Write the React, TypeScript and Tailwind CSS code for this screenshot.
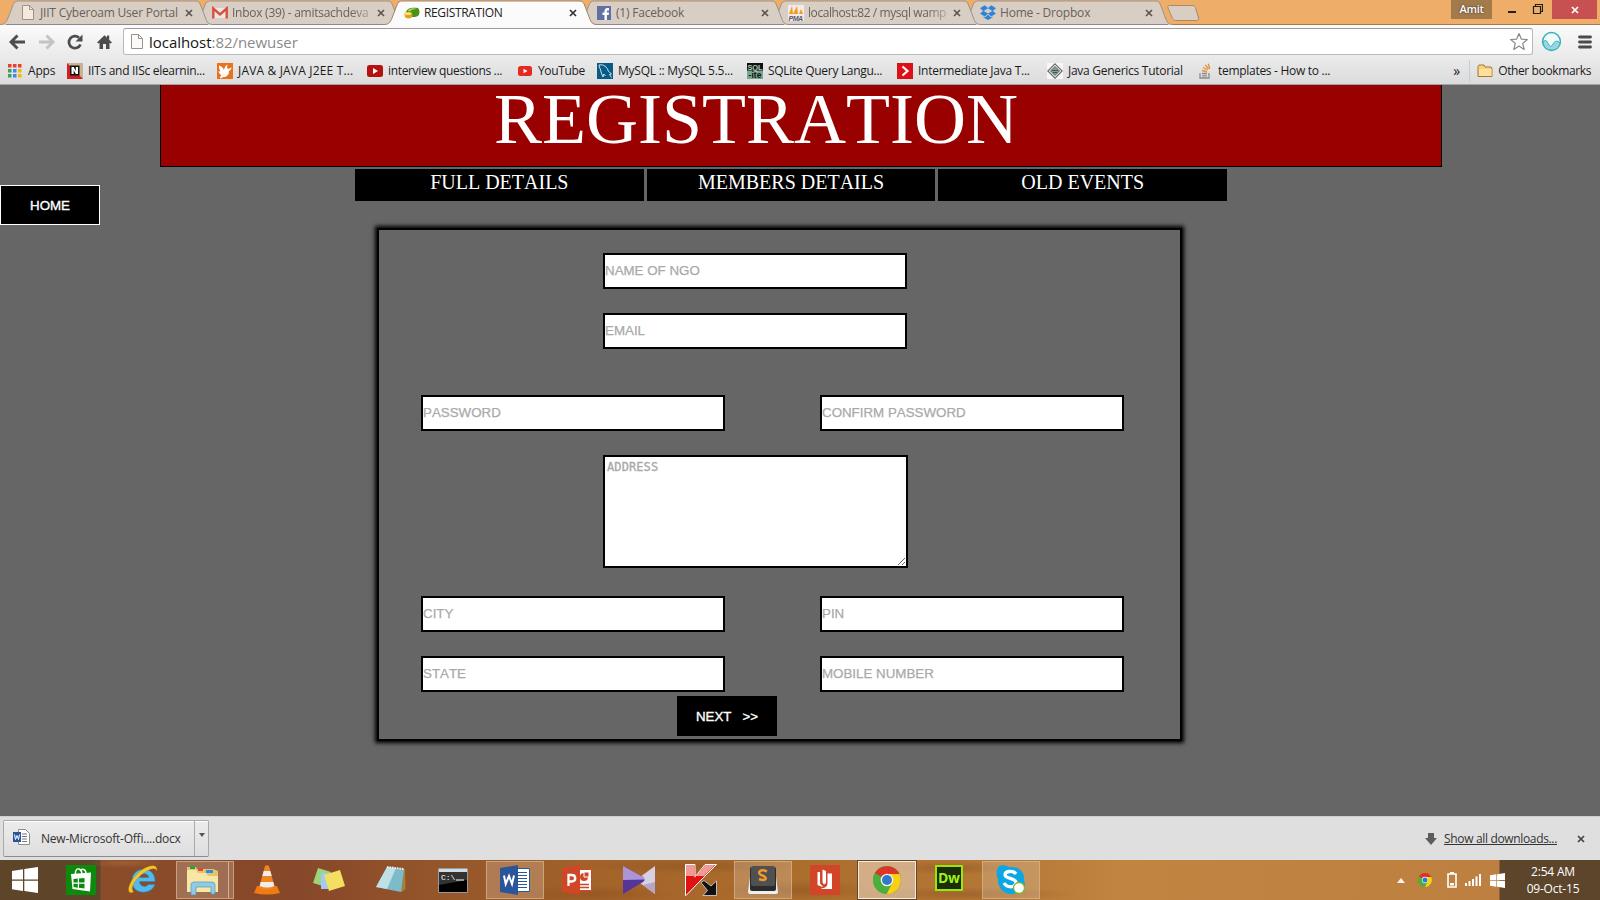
import type { ReactNode } from "react";

const UI = "font-['Open_Sans','Noto_Sans',sans-serif]";

/* ---------- small icons ---------- */
function PageIcon({ fill }: { fill: string }) {
  return (
    <svg width="12" height="15" viewBox="0 0 12 15">
      <path d="M.5.5h7l4 4v10H.5z" fill={fill} stroke="#9a938c" />
      <path d="M7.500.5v4h4" fill="none" stroke="#9a938c" />
    </svg>
  );
}

function GmailIcon() {
  return (
    <svg width="16" height="14" viewBox="0 0 16 14">
      <path d="M2 2h12v10H2z" fill="#eee7e1" />
      <path d="M1.300 12.500V2.500L8 8.500l6.700-6v10" fill="none" stroke="#d8503f" strokeWidth="2.400" />
    </svg>
  );
}

function LeafIcon() {
  return (
    <svg width="16" height="13" viewBox="0 0 16 13">
      <path d="M2 6C3 2 8 1 14 2c2 2 2 6 0 8-2 1-4 1-6 1z" fill="#4c8f1c" />
      <path d="M4 4c3-2 6-2 9-1-3 0-6 1-8 3z" fill="#a6d94f" />
      <path d="M0 7c3-1 6-1 8 0 1 3 0 4-1 5-3 1-5 0-6-1z" fill="#e0a31d" />
      <path d="M0 7c3-1 6-1 8 0l-2 2-5 0z" fill="#ffdf6a" />
    </svg>
  );
}

function FacebookIcon() {
  return (
    <svg width="14" height="14" viewBox="0 0 14 14">
      <path d="M0 0h14v14H0z" fill="#61709f" />
      <path d="M7.500 14V9H5.500V6.500h2V5c0-2 1.200-3 3-3H12v2.400h-1.200c-.7 0-.9.300-.9.900v1.200H12L11.700 9H9.900v5z" fill="#fff" />
    </svg>
  );
}

function PmaIcon() {
  return (
    <svg width="16" height="16" viewBox="0 0 16 16">
      <path d="M0 0h16v16H0z" fill="#f1ece8" />
      <path d="M1 9 4 1l1 8zM5 9l4-8 1 8zM11 9l2-5 2 5z" fill="#f39a1f" />
      <text x="0.500" y="15.500" fontSize="7" fontWeight="bold" fontStyle="italic" fontFamily="Liberation Sans, sans-serif" fill="#57566f" textLength="14.500">PMA</text>
    </svg>
  );
}

function DropboxIcon() {
  return (
    <svg width="16" height="15" viewBox="0 0 16 15">
      <path d="M4.700.3 8 3l3.300-2.700L16 3.300l-3.200 2.600L16 8.500l-4.700 3L8 8.800l-3.300 2.700L0 8.500l3.200-2.600L0 3.300zM8 3.300 3.700 5.900 8 8.500l4.300-2.600z" fill="#2f83d6" fillRule="evenodd" />
      <path d="m3.500 11.600 1.300.8L8 9.700l3.200 2.700 1.300-.8v1L8 15l-4.500-2.400z" fill="#2f83d6" />
    </svg>
  );
}

function AppsIcon() {
  const colors = ["#ea3f30", "#ea3f30", "#ea3f30", "#35a552", "#4285f4", "#f9b50b", "#35a552", "#4285f4", "#f9b50b"];
  return (
    <svg width="14" height="14" viewBox="0 0 14 14">
      {colors.map((c, i) => (
        <rect key={i} x={(i % 3) * 5} y={Math.floor(i / 3) * 5} width="3.500" height="3.500" fill={c} />
      ))}
    </svg>
  );
}

function IitIcon() {
  return (
    <svg width="16" height="16" viewBox="0 0 16 16">
      <path d="M0 0h16v16H0z" fill="#c9b491" />
      <path d="M0 0v16h16z" fill="#d11f27" />
      <path d="M3 2.500h9.500v10H3z" fill="#111" />
      <path d="M4.500 11V4h2.200l2.100 4V4H11v7H8.800L6.700 7.200V11z" fill="#fff" />
    </svg>
  );
}

function BirdIcon() {
  return (
    <svg width="16" height="16" viewBox="0 0 16 16">
      <path d="M0 0h16v16H0z" fill="#e8731c" />
      <path d="M2 2.500c2 .5 4 2 5 4.500C7.500 4.500 8.500 2.500 10.500 1.500c-.5 2-.3 3 0 4.500L15 4.500c-1 1.500-1.500 3-3 3.500 0 4-2.500 6-5.500 6L3 15.500c0-1.500.5-2.500 1.500-3.500C2.500 11 1.500 9.500 1.500 8 2 8.300 3 8.500 3.500 8.300 2.300 6.500 1.800 4.500 2 2.500z" fill="#fff" />
    </svg>
  );
}

function TubeIcon({ dark = false }: { dark?: boolean }) {
  return dark ? (
    <svg width="16" height="12" viewBox="0 0 16 12">
      <rect width="16" height="12" rx="2.500" fill="#b3120f" />
      <path d="M6 3v6l5-3z" fill="#fff" />
    </svg>
  ) : (
    <svg width="14" height="10" viewBox="0 0 14 10">
      <rect width="14" height="10" rx="2.500" fill="#e62a20" />
      <path d="M5.500 2.700v4.600l4-2.300z" fill="#fff" />
    </svg>
  );
}

function MysqlIcon() {
  return (
    <svg width="16" height="16" viewBox="0 0 16 16">
      <path d="M0 0h16v16H0z" fill="#085b86" />
      <path d="M2 2c5-1 8 2 9.500 6.500 1 1 2.500 1.500 3 2.500l-2 .5 2 3M2 2c0 3 2 4 2 7l2 5 .7-3 2 2" fill="none" stroke="#d4e4ec" strokeWidth="1" />
    </svg>
  );
}

function SqliteIcon() {
  return (
    <svg width="16" height="16" viewBox="0 0 16 16">
      <path d="M0 0h16v16H0z" fill="#79a690" />
      <path d="M0 0h16v7.500H0z" fill="#111" />
      <text x="0.500" y="6.700" fontSize="7.500" fontWeight="bold" fontFamily="Liberation Sans, sans-serif" fill="#a9cdb9" textLength="15">SQL</text>
      <text x="1.500" y="15" fontSize="8.500" fontWeight="bold" fontFamily="Liberation Sans, sans-serif" fill="#111" textLength="13">-ite</text>
    </svg>
  );
}

function RedArrowIcon() {
  return (
    <svg width="16" height="16" viewBox="0 0 16 16">
      <path d="M0 0h16v16H0z" fill="#dc1018" />
      <path d="m5.500 3.500 5 4.500-5 4.500" fill="none" stroke="#fff" strokeWidth="2.200" />
    </svg>
  );
}

function DiamondIcon() {
  return (
    <svg width="16" height="16" viewBox="0 0 16 16">
      <path d="M0 0h16v16H0z" fill="#f7f7f7" />
      <path d="m8 .8 7.200 7.200L8 15.200.8 8z" fill="#f1f4f2" stroke="#666" strokeWidth="1.100" />
      <path d="m8 3.500 4.500 4.500L8 12.500 3.500 8z" fill="#80a590" stroke="#444" strokeWidth=".8" />
      <path d="M5 7.500h6M6 9.500h4" stroke="#345" strokeWidth=".8" />
    </svg>
  );
}

function StackIcon() {
  return (
    <svg width="13" height="16" viewBox="0 0 13 16">
      <path d="M1 10v5h9v-5M3 12.800h5M3 10.500h5" fill="none" stroke="#8b8b8b" strokeWidth="1.300" />
      <path d="m3 7.500 5 1.300M4 4.500l4.500 2.700M6.300 2l3.200 4M9.300.7l1.500 5" stroke="#ee8d2d" strokeWidth="1.300" />
    </svg>
  );
}

function FolderIcon() {
  return (
    <svg width="16" height="14" viewBox="0 0 16 14">
      <path d="M1 12.500V2.500l1-1.500h5l1 2h6l1 1v8.500z" fill="#f8d17c" stroke="#a5773b" />
      <path d="M2 5h12.500v7H2z" fill="#ffe09a" />
    </svg>
  );
}

function CloseX({ color = "#5d5650" }: { color?: string }) {
  return (
    <svg width="8" height="8" viewBox="0 0 8 8">
      <path d="m1 1 6 6M7 1 1 7" stroke={color} strokeWidth="1.700" />
    </svg>
  );
}

/* ---------- tab strip ---------- */
type TabData = { title: string; icon: ReactNode; active?: boolean; fade?: boolean; z: string; track: string };

const tabs: TabData[] = [
  { title: "JIIT Cyberoam User Portal", icon: <PageIcon fill="#f6e9dc" />, z: "z-[6]", track: "tracking-[-0.2px]" },
  { title: "Inbox (39) - amitsachdeva", icon: <GmailIcon />, fade: true, z: "z-[5]", track: "tracking-[-0.26px]" },
  { title: "REGISTRATION", icon: <LeafIcon />, active: true, z: "z-[7]", track: "tracking-[-0.35px]" },
  { title: "(1) Facebook", icon: <FacebookIcon />, z: "z-[3]", track: "tracking-[-0.2px]" },
  { title: "localhost:82 / mysql wamp", icon: <PmaIcon />, fade: true, z: "z-[2]", track: "tracking-[-0.42px]" },
  { title: "Home - Dropbox", icon: <DropboxIcon />, z: "z-[1]", track: "tracking-[-0.2px]" },
];

function Tab({ tab }: { tab: TabData }) {
  return (
    <div className={`relative -mr-[22px] h-[25px] w-[214px] shrink-0 ${tab.z}`}>
      <svg className="absolute inset-0" width="214" height="25" viewBox="0 0 214 25">
        <path
          d="M0 25V24.500C5 24.500 6.500 22 8 18L13 5C14.300 2 15 1 18.500 1H195C198.500 1 199.500 2 200.500 5L205.500 18C207 22.500 208.500 24.500 213 24.500V25Z"
          fill={tab.active ? "#fbfbfb" : "#d8cec4"}
        />
        <path
          d="M0 24.500C5 24.500 6.500 22 8 18L13 5C14.300 2 15 1 18.500 1H195C198.500 1 199.500 2 200.500 5L205.500 18C207 22.500 208.500 24.500 213 24.500"
          fill="none"
          stroke={tab.active ? "#9c8468" : "#9f9389"}
          strokeWidth="1"
        />
        {!tab.active && <path d="M6 24.500h202" stroke="#8e8791" />}
      </svg>
      <div className="relative flex h-[25px] items-center pl-5">
        <span className="flex w-4 shrink-0 justify-center">{tab.icon}</span>
        <span
          className={`ml-1 min-w-0 flex-1 whitespace-nowrap text-[12px] leading-[25px] ${tab.track} ${tab.active ? "text-[#222]" : "text-[#6a615a]"} ${tab.fade ? "[mask-image:linear-gradient(to_right,black_84%,rgba(0,0,0,.25)_100%)]" : ""}`}
        >
          {tab.title}
        </span>
        <span className="ml-1 mr-[21px]">
          <CloseX color={tab.active ? "#333" : "#5d5650"} />
        </span>
      </div>
    </div>
  );
}

function TabStrip() {
  return (
    <div className="flex h-[25px] bg-[#eeae6a] shadow-[inset_0_-1px_0_#a8794a]">
      <div className="flex">
        {tabs.map((t) => (
          <Tab key={t.title} tab={t} />
        ))}
      </div>
      <svg className="ml-[15px] mt-[5px]" width="34" height="16" viewBox="0 0 34 16">
        <path d="M2.500.5H25c2 0 3 1 3.500 2l3 10.500c.5 1.500 0 2.500-2 2.500H9c-2 0-3-1-3.500-2L1 3C.5 1.500 1 .5 2.500.5z" fill="#d8cec4" stroke="#ad8a64" />
      </svg>
      <div className="flex-1" />
      <div className="flex">
        <div className="mr-4 h-[19px] w-[41px] bg-[#a37b4a] text-center text-[11px] font-semibold leading-[18px] tracking-[-0.3px] text-white [text-shadow:0_0_2px_#222]">Amit</div>
        <svg className="mr-[9px]" width="35" height="19" viewBox="0 0 35 19">
          <path d="M0 11h8v2H0z" fill="#1e1e1e" />
          <path d="M25.500 6.500h7v7h-7zM27.500 6.500v-2h7v7h-2" fill="none" stroke="#1e1e1e" strokeWidth="1.200" />
        </svg>
        <div className="mr-[3px] flex h-[19px] w-[45px] items-center justify-center bg-[#c75050]">
          <CloseX color="#fff" />
        </div>
      </div>
    </div>
  );
}

/* ---------- toolbar ---------- */
function Toolbar() {
  return (
    <div className="flex h-[33px] items-center">
      <svg className="ml-[9px]" width="104" height="20" viewBox="0 0 104 20">
        <path d="M2 10h14M8.500 3.500 2 10l6.500 6.500" fill="none" stroke="#4d4d4d" strokeWidth="2.900" />
        <path d="M30 10h14M37.500 3.500 44 10l-6.500 6.500" fill="none" stroke="#c3c3c3" strokeWidth="2.900" />
        <path d="M71.500 12.500A6 6 0 1 1 70 5.700" fill="none" stroke="#4d4d4d" strokeWidth="2.700" />
        <path d="M73.500 2.500v7h-7z" fill="#4d4d4d" />
        <path d="m88 10.500 7.500-7.300 2.500 2.300V3.500h2.200v4.300l2.800 2.700-1.500 1-1-.7V17h-3.500v-5h-3v5h-3.500v-6.200l-1 .7z" fill="#4d4d4d" />
      </svg>
      <div className="ml-[10px] flex h-[27px] w-[1410px] items-center rounded-[3px] border border-[#b9b9b9] border-t-[#9c9c9c] bg-white">
        <span className="ml-[7px]">
          <PageIcon fill="#fafafa" />
        </span>
        <span className="ml-[6px] flex-1 text-[15px] leading-6 tracking-[-0.04px] text-[#8a8a8a]">
          <span className="text-[#151515]">localhost</span>:82/newuser
        </span>
        <svg className="mr-[3px]" width="20" height="19" viewBox="0 0 20 19">
          <path d="m10 1.500 2.300 5.600 6 .4-4.600 3.900 1.500 6L10 14l-5.200 3.400 1.500-6L1.700 7.500l6-.4z" fill="#fff" stroke="#888" strokeWidth="1.200" strokeLinejoin="round" />
        </svg>
      </div>
      <svg className="ml-[8px]" width="21" height="21" viewBox="0 0 21 21">
        <circle cx="10.500" cy="10.500" r="8.900" fill="#f2fafa" stroke="#38b1bd" strokeWidth="1.500" />
        <path d="M2 11c3-3 4-1 6 3 1 2 2 2 4-1 2-3 4-4 7-1-1 5-4 7-8.500 7S3 17 2 11z" fill="#9ad6df" stroke="#38b1bd" />
      </svg>
      <svg className="ml-[16px]" width="14" height="14" viewBox="0 0 14 14">
        <path d="M1.500 2h11M1.500 7h11M1.500 12h11" stroke="#4b4b4b" strokeWidth="2.800" strokeLinecap="round" />
      </svg>
    </div>
  );
}

const bookmarks: { label: string; icon: ReactNode; w: string; track: string }[] = [
  { label: "Apps", icon: <AppsIcon />, w: "w-[60px]", track: "tracking-[-0.2px]" },
  { label: "IITs and IISc elearnin...", icon: <IitIcon />, w: "w-[150px]", track: "tracking-[-0.29px]" },
  { label: "JAVA & JAVA J2EE T...", icon: <BirdIcon />, w: "w-[150px]", track: "tracking-[0.17px]" },
  { label: "interview questions ...", icon: <TubeIcon dark />, w: "w-[150px]", track: "tracking-[-0.34px]" },
  { label: "YouTube", icon: <TubeIcon />, w: "w-[80px]", track: "tracking-[-0.35px]" },
  { label: "MySQL :: MySQL 5.5...", icon: <MysqlIcon />, w: "w-[150px]", track: "tracking-[-0.24px]" },
  { label: "SQLite Query Langu...", icon: <SqliteIcon />, w: "w-[150px]", track: "tracking-[-0.3px]" },
  { label: "Intermediate Java T...", icon: <RedArrowIcon />, w: "w-[150px]", track: "tracking-[-0.26px]" },
  { label: "Java Generics Tutorial", icon: <DiamondIcon />, w: "w-[150px]", track: "tracking-[-0.28px]" },
  { label: "templates - How to ...", icon: <StackIcon />, w: "w-[150px]", track: "tracking-[-0.29px]" },
];

function BookmarksBar() {
  return (
    <div className="flex h-[26px] items-center pl-[7px] text-[12px] leading-[22px] text-[#1b1b1b]">
      {bookmarks.map((b) => (
        <div key={b.label} className={`flex shrink-0 items-center whitespace-nowrap ${b.w}`}>
          <span className="flex w-4 shrink-0 justify-center">{b.icon}</span>
          <span className={`mb-px ml-[5px] ${b.track}`}>{b.label}</span>
        </div>
      ))}
      <div className="flex-1" />
      <span className="mb-px mr-[9px] text-[14px]">»</span>
      <span className="h-[22px] w-px bg-[#c6cdd6]" />
      <span className="ml-[7px]">
        <FolderIcon />
      </span>
      <span className="mb-px ml-[5px] mr-[9px] whitespace-nowrap tracking-[-0.38px]">Other bookmarks</span>
    </div>
  );
}

/* ---------- page ---------- */
function Field({ label, className = "" }: { label: string; className?: string }) {
  return (
    <input
      placeholder={label}
      className={`block h-9 w-[304px] shrink-0 border-2 border-black bg-white pb-px text-[13.33px] [font-kerning:none] placeholder:text-[#a9a9a9] placeholder:opacity-100 placeholder:[-webkit-text-stroke:0.25px_#a9a9a9] ${className}`}
    />
  );
}

function FieldPair({ left, right, className }: { left: string; right: string; className: string }) {
  return (
    <div className={`ml-[42px] flex gap-[95px] ${className}`}>
      <Field label={left} />
      <Field label={right} />
    </div>
  );
}

function RegistrationPage() {
  return (
    <main className="h-[731px] overflow-hidden bg-[#666] font-['Liberation_Sans',Arial,sans-serif]">
      <header className="ml-[160px] h-[82px] w-[1282px] border border-t-0 border-black bg-[#900] pl-[333px]">
        <h1 className="font-['Liberation_Serif','Times_New_Roman',serif] text-[72px] leading-[69px] text-white [font-kerning:none]">REGISTRATION</h1>
      </header>
      <div className="flex h-[56px]">
        <button className="mt-[18px] h-10 w-[100px] shrink-0 border border-white bg-black pt-px text-[13.33px] text-white [-webkit-text-stroke:0.35px_#fff] [font-kerning:none]">HOME</button>
        <nav className="ml-[255px] mt-[2px] flex h-8 gap-[3px] font-['Liberation_Serif','Times_New_Roman',serif] text-[20px] leading-[27px] text-white [font-kerning:none]">
          {["FULL DETAILS", "MEMBERS DETAILS", "OLD EVENTS"].map((t) => (
            <a key={t} className="w-[288.7px] bg-black text-center">
              {t}
            </a>
          ))}
        </nav>
      </div>
      <form className="ml-[377px] mt-[5px] h-[513px] w-[805px] border-2 border-black pt-[23px] shadow-[0_0_4px_2px_#000]">
        <Field label="NAME OF NGO" className="ml-[224px]" />
        <Field label="EMAIL" className="ml-[224px] mt-6" />
        <FieldPair left="PASSWORD" right="CONFIRM PASSWORD" className="mt-[46px]" />
        <textarea
          placeholder="ADDRESS"
          className="ml-[224px] mt-6 block h-[113px] w-[305px] resize border-2 border-black bg-white p-[2px] font-['DejaVu_Sans_Mono',monospace] text-[12px] leading-[17px] tracking-[0.1px] placeholder:text-[#a9a9a9] placeholder:opacity-100 placeholder:[-webkit-text-stroke:0.3px_#a9a9a9]"
        />
        <FieldPair left="CITY" right="PIN" className="mt-7" />
        <FieldPair left="STATE" right="MOBILE NUMBER" className="mt-6" />
        <button
          type="button"
          className="ml-[298px] mt-1 block h-10 w-[100px] whitespace-pre bg-black pt-px text-[13.33px] text-white [-webkit-text-stroke:0.35px_#fff] [font-kerning:none]"
        >
          {"NEXT   >>"}
        </button>
      </form>
    </main>
  );
}

/* ---------- download shelf ---------- */
function DownloadShelf() {
  return (
    <div className="flex h-[44px] items-center border-t border-[#cfcfcf] bg-[#dfdfdf] text-[12px] text-[#333]">
      <div className="ml-[3px] flex h-[37px] w-[206px] items-center rounded-[2px] border border-[#a9a9a9] border-b-[#8c8c8c] bg-gradient-to-b from-[#ececec] to-[#dedede] shadow-[inset_0_1px_0_#fff]">
        <svg className="ml-[9px] mb-[3px]" width="17" height="17" viewBox="0 0 17 17">
          <path d="M5.500.5h7l4 4v11h-11z" fill="#fff" stroke="#8d8d8d" />
          <path d="M9 5h5M9 7.500h5M9 10h5M9 12.500h5" stroke="#777" />
          <path d="M0 3h8v10H0z" fill="#2a5699" />
          <path d="m1.500 5.500 1 5 1.500-4 1.500 4 1-5" fill="none" stroke="#fff" />
        </svg>
        <span className="ml-[11px] flex-1 whitespace-nowrap tracking-[-0.22px]">New-Microsoft-Offi....docx</span>
        <span className="flex h-full w-[14px] items-start justify-center border-l border-[#a9a9a9] pt-[12px]">
          <svg width="6" height="4" viewBox="0 0 6 4">
            <path d="M0 0h6L3 4z" fill="#555" />
          </svg>
        </span>
      </div>
      <div className="flex-1" />
      <svg width="12" height="12" viewBox="0 0 12 12">
        <path d="M3 0h6v5h3l-6 7-6-7h3z" fill="#5d5d5d" />
      </svg>
      <span className="ml-[7px] whitespace-nowrap tracking-[-0.34px] underline">Show all downloads...</span>
      <span className="ml-[20px] mr-[15px]">
        <CloseX color="#444" />
      </span>
    </div>
  );
}

/* ---------- taskbar ---------- */
function WindowsLogo({ size }: { size: number }) {
  return (
    <svg width={size} height={size} viewBox="0 0 26 26">
      <path d="M0 4 11 2.300V12.500H0zM12.300 2 26 0v12.500H12.300zM0 13.700h11V24L0 22.300zM12.300 13.700H26V26l-13.700-2z" fill="#fff" />
    </svg>
  );
}

function ChromeIcon({ size }: { size: number }) {
  return (
    <svg width={size} height={size} viewBox="0 0 28 28">
      <circle cx="14" cy="14" r="14" fill="#4caf3c" />
      <path d="M14 14 1.900 7A14 14 0 0 1 26.500 8H14z" fill="#dc3528" />
      <path d="M14 8h12.500A14 14 0 0 1 13.500 28L19.200 17z" fill="#fbcf12" />
      <path d="M1.900 7A14 14 0 0 0 13.500 28L19 17 9 17z" fill="#4caf3c" />
      <circle cx="14" cy="14" r="6.300" fill="#f4f4f4" />
      <circle cx="14" cy="14" r="5" fill="#3279c8" />
    </svg>
  );
}

const apps: { name: string; frame?: "open" | "focus" | "stack"; icon: ReactNode }[] = [
  {
    name: "store",
    icon: (
      <svg width="30" height="30" viewBox="0 0 30 30">
        <path d="M0 0h30v30H0z" fill="#0c8a0c" />
        <path d="m5 9 20-1.500-1 19L6.500 24z" fill="#fff" />
        <path d="M9.500 10C9 5 11 3.500 13 4s3 3 3 6M14 6c2-3 6-2 6 3" fill="none" stroke="#fff" strokeWidth="1.400" />
        <path d="m7.500 14 4.300-.4v4H7.500zM13 13.400l5.500-.5v4.700H13zM7.500 18.700h4.300v4l-4.300-.6zM13 18.700h5.500v4.800l-5.500-.7z" fill="#0c8a0c" />
      </svg>
    ),
  },
  {
    name: "ie",
    icon: (
      <svg width="32" height="32" viewBox="0 0 32 32">
        <path d="M28 17.500H12.500c.3 5 6 6.500 9 3h6.500C24 31.500 5 31 5 17 5 1 29 1.500 28 17.500zm-15.400-4h9.200c-.5-5-8.500-5-9.200 0z" fill="#52b9ec" stroke="#2384bd" strokeWidth=".6" fillRule="evenodd" />
        <path d="M6.500 28C-1 32 0 20 10 10 20 0 32-1 29.500 7c0-4-7-3-15 3.500C7 17 3 24 6.500 28z" fill="#f7c62d" stroke="#bb8417" strokeWidth=".4" />
      </svg>
    ),
  },
  {
    name: "explorer",
    frame: "stack",
    icon: (
      <svg width="34" height="30" viewBox="0 0 34 30">
        <path d="M1 2h9l1 2h16l5 2v21H1z" fill="#e4c56c" />
        <path d="M4 1h5v3H4z" fill="#28a348" />
        <path d="M12 3h5v3h-5z" fill="#d94f33" />
        <path d="M20 5h7v3h-7z" fill="#2f8be0" />
        <path d="M1 5h9l2 3h8l2 3h10v16H1z" fill="#f8e7a4" />
        <path d="M5 30V20q0-3 3-3h18q3 0 3 3v9h-4v-7H10v8z" fill="#8fcbe9" stroke="#4f98c0" strokeWidth=".7" />
      </svg>
    ),
  },
  {
    name: "vlc",
    icon: (
      <svg width="28" height="30" viewBox="0 0 28 30">
        <path d="M4 21h20l3 7q-13 3-26 0z" fill="#ef7b12" />
        <path d="M12 1q2-1.500 4 0l6 22q-8 4-16 0z" fill="#f18420" />
        <path d="m10.700 6 6.600 0 1.400 5h-9.400zM7.700 17h12.600l1 4q-7 3-14.600 0z" fill="#f0eeea" />
      </svg>
    ),
  },
  {
    name: "notes",
    icon: (
      <svg width="34" height="28" viewBox="0 0 34 28">
        <path d="m6 2 13 4-5 15L1 17z" fill="#9ed47b" />
        <path d="M9 7h14v16H9z" fill="#a2c9f1" />
        <path d="m12 9 16-5 5 16-16 5z" fill="#f5df62" />
      </svg>
    ),
  },
  {
    name: "notepad",
    icon: (
      <svg width="32" height="30" viewBox="0 0 32 30">
        <path d="m12 3 18 1 .5 20-4 3z" fill="#9b8346" />
        <path d="m12 2 17 2-3 23L1 22z" fill="#7dbbc9" />
        <path d="m12 2 9 1-9 21-11-2z" fill="#bfe0e4" />
        <path d="m12 2 17 2" stroke="#eee" strokeWidth="2" strokeDasharray="1.500 1" />
      </svg>
    ),
  },
  {
    name: "cmd",
    icon: (
      <svg width="30" height="25" viewBox="0 0 30 25">
        <path d="M.5.5h29v24H.5z" fill="#000" stroke="#9a9a9a" />
        <path d="M1 1h28v3H1z" fill="#d5dbe2" />
        <path d="M1 4h28v8L1 17z" fill="#333" />
        <text x="3" y="12" fontSize="8" fontFamily="Liberation Mono, monospace" fill="#fff">C:\</text>
        <path d="M18 12h8" stroke="#fff" />
      </svg>
    ),
  },
  {
    name: "word",
    frame: "open",
    icon: (
      <svg width="30" height="30" viewBox="0 0 30 30">
        <path d="M16 3.500h13.500v23H16z" fill="#fff" stroke="#2a5699" />
        <path d="M18 7.500h9M18 10.500h9M18 13.500h9M18 16.500h9M18 19.500h9M18 22.500h9" stroke="#2a5699" />
        <path d="m0 3 18-3v30L0 27z" fill="#2a5699" />
        <path d="m4 10.500 1.700 8.500L9 11l3 8 2-8.500" fill="none" stroke="#fff" strokeWidth="2" />
      </svg>
    ),
  },
  {
    name: "powerpoint",
    icon: (
      <svg width="30" height="30" viewBox="0 0 30 30">
        <path d="M16 4.500h13.500v21H16z" fill="#fff" stroke="#d04727" />
        <circle cx="22" cy="12" r="4" fill="#d04727" />
        <path d="M22 12V7h5v5z" fill="#d04727" stroke="#fff" />
        <path d="M18 19.500h9M18 22.500h9" stroke="#d04727" strokeWidth="1.500" />
        <path d="m0 3 18-3v30L0 27z" fill="#d04727" />
        <path d="M6.500 21V10h3c5 0 5 6.500 0 6.500h-3" fill="none" stroke="#fff" strokeWidth="2.300" />
      </svg>
    ),
  },
  {
    name: "player",
    icon: (
      <svg width="32" height="28" viewBox="0 0 32 28">
        <path d="M32 0v28L13 14z" fill="#d8d0e2" />
        <path d="M32 28V16l-12 3z" fill="#b4a7c6" />
        <path d="M0 0 20 11q3 3 0 5L0 28z" fill="#55359a" />
        <path d="M0 0 20 11q2 1 2 2.500L0 14z" fill="#ab95d6" />
      </svg>
    ),
  },
  {
    name: "antivirus",
    icon: (
      <svg width="32" height="32" viewBox="0 0 32 32">
        <path d="M.5.5H10V13L20 .5h11.500L16 16 1 31.500H.5z" fill="#e11212" stroke="#fff" />
        <path d="M1 1h8.500v13L20 1h10L19 12H1z" fill="#f19a95" />
        <path d="m16 18.500 3-2 7 5.500 5.500-5v14.500H18l4.500-5z" fill="#111" stroke="#ddd" strokeWidth=".8" />
      </svg>
    ),
  },
  {
    name: "sublime",
    frame: "open",
    icon: (
      <svg width="30" height="29" viewBox="0 0 30 29">
        <path d="M3 3h24l3 23q0 2-2 2H2q-2 0-2-2z" fill="#eee" />
        <rect x="2" y="1" width="26" height="24" rx="2" fill="#2b2b2b" />
        <rect x="3" y="0" width="24" height="20" rx="2" fill="#505050" />
        <path d="M19 5.500c-7-3-10 1-6 3.500 7 2 6 7-2 4" fill="none" stroke="#f5972c" strokeWidth="2.500" />
      </svg>
    ),
  },
  {
    name: "reader",
    icon: (
      <svg width="30" height="30" viewBox="0 0 30 30">
        <path d="M0 0h30v30H0z" fill="#d14628" />
        <path d="M7.500 7h2.500v11.500l2.500 2.500v1L7.500 20z" fill="#fff" />
        <path d="m12.500 4.500 3.500 1.500v12l-2 1.500-1.500-2z" fill="#fff" />
        <path d="M17.500 8.500H22V24H11.500v-.8c3-.2 5.500-1.200 6-4.200z" fill="#fff" />
      </svg>
    ),
  },
  { name: "chrome", frame: "focus", icon: <ChromeIcon size={28} /> },
  {
    name: "dreamweaver",
    icon: (
      <svg className="mb-1" width="28" height="26" viewBox="0 0 28 26">
        <path d="M1 1h26v24H1z" fill="#1d2c09" stroke="#92e90b" strokeWidth="2" />
        <text x="3" y="18" fontSize="14" fontWeight="bold" fontFamily="Open Sans, sans-serif" fill="#9cf31a" textLength="22">Dw</text>
      </svg>
    ),
  },
  {
    name: "skype",
    frame: "open",
    icon: (
      <svg width="30" height="30" viewBox="0 0 30 30">
        <path d="M3 1q6-2 10 1c10-1 16 5 15 14 3 6-1 13-7 12-10 4-20-4-19-14-2-4-2-9 1-13z" fill="#0ba6e6" />
        <path d="M20 9c-3-4-11-3-11 1s12 3 11 8-9 5-12 0" fill="none" stroke="#fff" strokeWidth="3.300" />
        <circle cx="23" cy="23" r="5.500" fill="#fff" stroke="#7ab52a" strokeWidth="1.300" />
      </svg>
    ),
  },
];

function frameClass(frame?: "open" | "focus" | "stack") {
  if (frame === "focus") return "border border-[#f3ebe2] bg-[#ead5c0]/60 outline outline-1 outline-[#694522]";
  if (frame === "open" || frame === "stack") return "border border-[#d8b58f]/70 bg-white/20";
  return "";
}

function Taskbar() {
  return (
    <footer className="flex h-10 items-center bg-[radial-gradient(90px_9px_at_590px_34px,#8c501f90,transparent),radial-gradient(110px_8px_at_690px_6px,#85501f80,transparent),radial-gradient(80px_10px_at_800px_30px,#8b501f80,transparent),radial-gradient(120px_7px_at_960px_34px,#8b552680,transparent),radial-gradient(60px_7px_at_950px_8px,#8b552690,transparent),radial-gradient(40px_5px_at_125px_3px,#b0713c80,transparent),linear-gradient(90deg,#5e4529_0,#5e4529_100px,#8a4d29_101px,#87472a_300px,#94552a_430px,#a4632a_600px,#ab6d2c_780px,#b57735_1000px,#c18441_1120px,#be8040_1499px,#5c452b_1500px)]">
      <div className="flex w-[50px] justify-center">
        <WindowsLogo size={26} />
      </div>
      {apps.map((a) => (
        <div key={a.name} className="flex h-10 w-[62px] shrink-0 items-center justify-center">
          <div className={`flex h-[38px] w-[58px] items-center justify-center ${frameClass(a.frame)}`}>
            <div className="flex flex-1 justify-center">{a.icon}</div>
            {a.frame === "stack" && <div className="h-full w-[5px] border-l border-[#d8b58f]/90" />}
          </div>
        </div>
      ))}
      <div className="flex-1" />
      <svg width="8" height="5" viewBox="0 0 8 5">
        <path d="M0 5h8L4 0z" fill="#f8f4ec" />
      </svg>
      <span className="ml-[13px]">
        <ChromeIcon size={14} />
      </span>
      <svg className="ml-[15px]" width="10" height="16" viewBox="0 0 10 16">
        <path d="M1 2h8v13H1z" fill="none" stroke="#fff" strokeWidth="1.600" />
        <path d="M3 0h4v2H3zM3 11h4v2.500H3z" fill="#fff" />
      </svg>
      <svg className="ml-[8px]" width="16" height="12" viewBox="0 0 16 12">
        <path d="M0 9h2v3H0zM3.500 7h2v5h-2zM7 5h2v7H7zM10.500 2.500h2V12h-2zM14 0h2v12h-2z" fill="#fff" />
      </svg>
      <span className="ml-[9px] mr-[1px]">
        <WindowsLogo size={15} />
      </span>
      <div className="w-[94px] text-center text-[12px] leading-[17px] tracking-[-0.2px] text-white">
        <div>2:54 AM</div>
        <div>09-Oct-15</div>
      </div>
    </footer>
  );
}

export default function App() {
  return (
    <div className={`h-[900px] w-[1600px] overflow-hidden ${UI}`}>
      <TabStrip />
      <div className="h-[60px] border-b border-[#a3a3a3] bg-gradient-to-b from-[#fbfbfb] to-[#dcdcdc]">
        <Toolbar />
        <BookmarksBar />
      </div>
      <RegistrationPage />
      <DownloadShelf />
      <Taskbar />
    </div>
  );
}
